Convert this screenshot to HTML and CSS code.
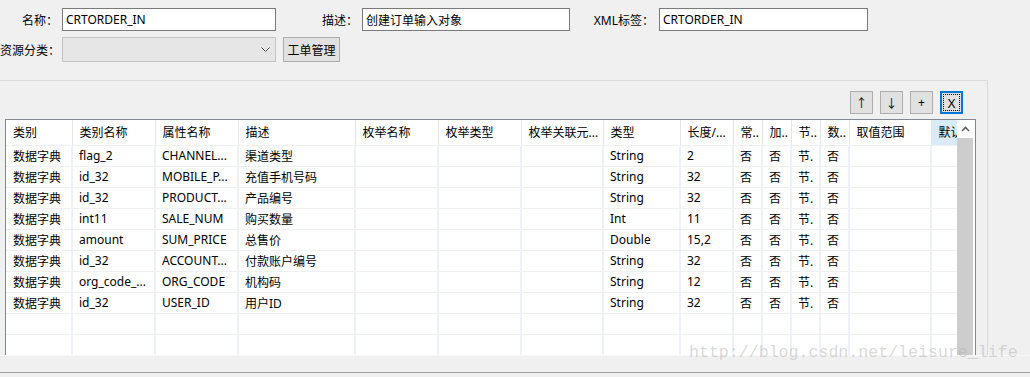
FILE: index.html
```html
<!DOCTYPE html>
<html lang="zh-CN">
<head>
  <meta charset="UTF-8">
  <title>CRTORDER_IN</title>
  <link rel="stylesheet" href="styles.css">
</head>
<body>
  <div class="form">
    <div class="form-row">
      <label class="label">名称：</label>
      <input class="text-field name-field" value="CRTORDER_IN">
      <label class="label desc-label">描述：</label>
      <input class="text-field desc-field" value="创建订单输入对象">
      <label class="label xml-label">XML标签：</label>
      <input class="text-field xml-field" value="CRTORDER_IN">
    </div>
    <div class="form-row row-two">
      <label class="label">资源分类：</label>
      <div class="combo">
        <svg class="combo-arrow" width="9" height="5" viewBox="0 0 9 5"><path d="M0.5 0.5 L4.5 4.5 L8.5 0.5" fill="none" stroke="#555" stroke-width="1"/></svg>
      </div>
      <button class="btn order-btn">工单管理</button>
    </div>
  </div>

  <div class="panel">
    <div class="toolbar">
      <button class="tool-btn">&#8593;</button>
      <button class="tool-btn">&#8595;</button>
      <button class="tool-btn">+</button>
      <button class="tool-btn focused"><span class="focus-ring">X</span></button>
    </div>

    <div class="grid-box">
      <div class="grid-view">
        <table class="grid">
          <colgroup>
            <col style="width:66px"><col style="width:83px"><col style="width:83px"><col style="width:117px">
            <col style="width:83px"><col style="width:83px"><col style="width:82px"><col style="width:77px">
            <col style="width:53px"><col style="width:29px"><col style="width:29px"><col style="width:29px">
            <col style="width:29px"><col style="width:82px"><col style="width:60px">
          </colgroup>
          <thead>
            <tr>
              <th>类别</th><th>类别名称</th><th>属性名称</th><th>描述</th><th>枚举名称</th><th>枚举类型</th>
              <th>枚举关联元...</th><th>类型</th><th>长度/...</th><th>常..</th><th>加..</th><th>节..</th>
              <th>数..</th><th>取值范围</th><th class="active">默认值</th>
            </tr>
          </thead>
          <tbody id="rows"></tbody>
        </table>
      </div>
      <div class="vscroll">
        <div class="vscroll-btn">
          <svg width="9" height="6" viewBox="0 0 9 6"><path d="M1 5 L4.5 1.5 L8 5" fill="none" stroke="#606060" stroke-width="1.6"/></svg>
        </div>
        <div class="vscroll-thumb"></div>
      </div>
    </div>
  </div>

  <div class="status-strip"></div>

  <div class="watermark">http://blog.csdn.net/leisure_life</div>

  <script>
    // 属性列表
    const attrs = [
      ["flag_2", "CHANNEL...", "渠道类型", "String", "2"],
      ["id_32", "MOBILE_P...", "充值手机号码", "String", "32"],
      ["id_32", "PRODUCT...", "产品编号", "String", "32"],
      ["int11", "SALE_NUM", "购买数量", "Int", "11"],
      ["amount", "SUM_PRICE", "总售价", "Double", "15,2"],
      ["id_32", "ACCOUNT...", "付款账户编号", "String", "32"],
      ["org_code_...", "ORG_CODE", "机构码", "String", "12"],
      ["id_32", "USER_ID", "用户ID", "String", "32"]
    ];

    const tbody = document.getElementById('rows');
    attrs.forEach(a => {
      const tr = document.createElement('tr');
      tr.innerHTML = `
        <td>数据字典</td><td>${a[0]}</td><td>${a[1]}</td><td>${a[2]}</td>
        <td></td><td></td><td></td><td>${a[3]}</td><td>${a[4]}</td>
        <td>否</td><td>否</td><td>节.</td><td>否</td><td></td><td></td>`;
      tbody.appendChild(tr);
    });
    for (let i = 0; i < 2; i++) {
      const tr = document.createElement('tr');
      tr.innerHTML = '<td></td>'.repeat(15);
      tbody.appendChild(tr);
    }
  </script>
</body>
</html>
```

FILE: styles.css
```css
* { margin: 0; padding: 0; box-sizing: border-box; }
body {
  background: #f0f0f0; color: #000;
  font-family: "Noto Sans", "Noto Sans CJK SC", sans-serif;
  font-size: 12px; width: 1030px; height: 377px;
  overflow: hidden; position: relative;
}
.form { padding-top: 8px; }
.form-row { display: flex; align-items: center; height: 23px; }
.row-two { margin-top: 6px; height: 25px; }
.label { width: 58px; text-align: right; white-space: nowrap; margin-right: 4px; }
.desc-label { width: 36px; margin-left: 46px; margin-right: 4px; }
.xml-label { width: 62px; margin-left: 22px; margin-right: 5px; }
.text-field {
  height: 23px; border: 1px solid #7a7a7a; background: #fff;
  font: inherit; padding: 0 3px; outline: none;
}
.name-field { width: 214px; }
.desc-field { width: 208px; }
.xml-field { width: 209px; }
.combo {
  width: 214px; height: 25px; border: 1px solid #c4c4c4;
  background: #e6e6e6; position: relative;
}
.combo-arrow { position: absolute; right: 5px; top: 9px; }
.btn {
  height: 25px; border: 1px solid #adadad; background: #e1e1e1;
  font: inherit; padding: 0; white-space: nowrap;
}
.order-btn { width: 57px; margin-left: 7px; }

.panel {
  margin-top: 18px; margin-left: -1px; width: 989px; height: 275px;
  border-top: 1px solid #dadada; border-right: 1px solid #dadada;
  padding: 10px 24px 0 6px;
}
.toolbar { display: flex; justify-content: flex-end; gap: 7px; height: 23px; }
.tool-btn {
  width: 23px; height: 23px; border: 1px solid #adadad; background: #e1e1e1;
  font: inherit; font-size: 12px; display: flex; align-items: center; justify-content: center;
}
.tool-btn.focused { border: 2px solid #0078d7; }
.focus-ring {
  width: 17px; height: 17px; border: 1px dotted #000;
  display: flex; align-items: center; justify-content: center; font-size: 13px;
}

.grid-box {
  margin-top: 5px; width: 971px; height: 236px;
  border: 1px solid #828790; border-bottom: none;
  background: #fff; display: flex; padding-right: 2px;
}
.grid-view { width: 951px; overflow: hidden; }
.grid { border-collapse: collapse; table-layout: fixed; width: 925px; }
.grid th, .grid td {
  text-align: left; font-weight: normal; white-space: nowrap; overflow: hidden;
  padding: 0 0 0 6px;
}
.grid th { height: 25px; border-right: 1px solid #e5e5e5; padding-left: 7px; }
.grid th.active { background: #d9ebf9; border-right: none; }
.grid td {
  height: 21px; border-right: 2px solid #eef2f8; border-top: 1px solid #eef0f3;
}
.grid td:first-child { padding-left: 7px; }

.vscroll { width: 16px; background: #fff; display: flex; flex-direction: column; }
.vscroll-btn { height: 18px; display: flex; align-items: center; justify-content: center; }
.vscroll-thumb { flex: 1; background: #cdcdcd; }

.status-strip {
  height: 18px; border-top: 1px solid #f8f8f8; border-bottom: 1px solid #a0a0a0;
}

.watermark {
  position: absolute; left: 689px; top: 343px;
  font-family: "Liberation Mono", monospace; font-size: 16.6px;
  color: rgba(170, 170, 170, 0.45); white-space: nowrap;
}
```
